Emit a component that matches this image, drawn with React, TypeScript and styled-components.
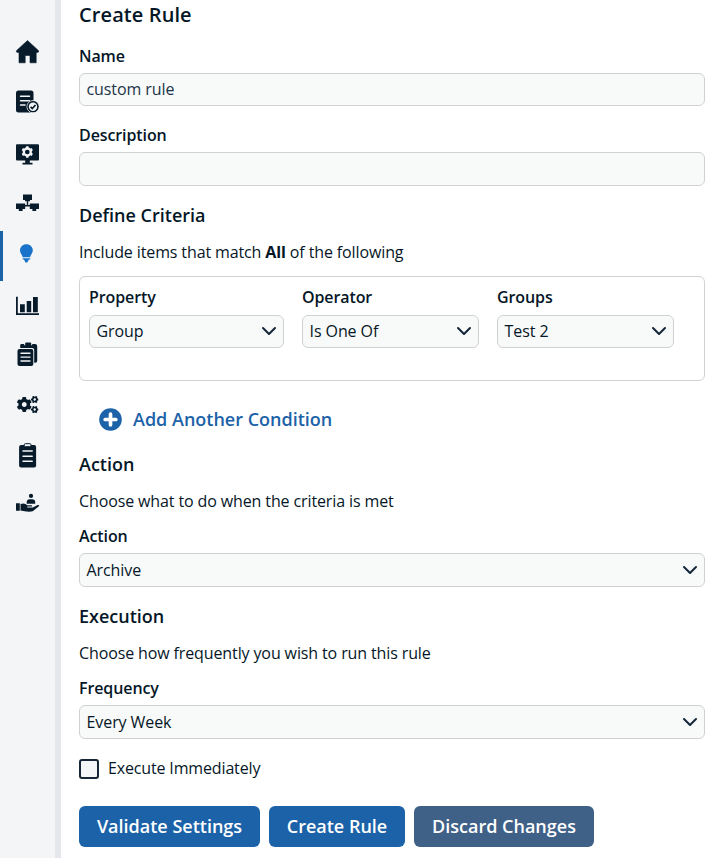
import React from "react";
import styled, { createGlobalStyle } from "styled-components";
import { FaCogs } from "react-icons/fa";

const GlobalStyle = createGlobalStyle`
  * { box-sizing: border-box; }
  body { margin: 0; background: #fff; overflow: hidden; }
  body, input, select, button { font-family: "Open Sans", sans-serif; color: #051727; }
`;

const Page = styled.div`
  display: flex;
  height: 858px;
`;

const Sidebar = styled.nav`
  width: 61px;
  flex: none;
  padding-top: 31px;
  background: #f3f5f7;
  border-right: 6px solid #e4e7ec;
`;

const NavItem = styled.a<{ $active?: boolean }>`
  display: block;
  height: 50px;
  color: ${(p) => (p.$active ? "#1a73cb" : "#071b2b")};
  box-shadow: ${(p) => (p.$active ? "inset 3px 0 0 #1c62a8" : "none")};
  svg { display: block; }
`;

const Main = styled.main`
  flex: 1;
  padding: 1px 20px 0 18px;
`;

const Title = styled.h1`
  margin: 0;
  font-size: 20px;
  font-weight: 600;
  line-height: 28px;
  letter-spacing: 0.1px;
`;

const SectionTitle = styled.h2<{ $gap: number }>`
  margin: ${(p) => p.$gap}px 0 0;
  font-size: 18px;
  font-weight: 600;
  line-height: 24px;
`;

const Hint = styled.p`
  margin: 13px 0 0;
  font-size: 16px;
  line-height: 24px;
  letter-spacing: -0.12px;
`;

const Field = styled.div<{ $gap?: number; $width?: number }>`
  margin-top: ${(p) => p.$gap ?? 0}px;
  width: ${(p) => (p.$width ? `${p.$width}px` : "100%")};
`;

const Label = styled.label`
  display: block;
  font-size: 16px;
  font-weight: 600;
  line-height: 24px;
  letter-spacing: -0.1px;
  margin-bottom: 5px;
`;

const Control = styled.div<{ $tall?: boolean }>`
  display: flex;
  align-items: center;
  justify-content: space-between;
  height: ${(p) => (p.$tall ? 34 : 33)}px;
  padding: 0 6px 0 6.5px;
  border: 1px solid #cfd1d4;
  border-radius: 6px;
  background: #f8faf9;
  font-size: 16px;
  line-height: 24px;
  letter-spacing: -0.08px;
`;

const TextInput = styled.input`
  flex: 1;
  padding: 0 0 2px;
  border: 0;
  outline: 0;
  background: transparent;
  font-size: 16px;
  line-height: 24px;
  letter-spacing: -0.08px;
  color: #1d3448;
`;

const Criteria = styled.section`
  display: flex;
  gap: 18px;
  height: 105px;
  margin-top: 12px;
  padding: 8px 9px;
  border: 1px solid #cfd1d4;
  border-radius: 6px;
  ${Label} { margin-bottom: 6px; }
  ${Control} { padding-bottom: 1px; }
`;

const AddButton = styled.button`
  display: flex;
  align-items: center;
  gap: 11px;
  height: 24px;
  margin: 26px 0 0 20px;
  padding: 0;
  border: 0;
  background: none;
  color: #1c62a8;
  font-size: 18px;
  font-weight: 600;
  line-height: 24px;
`;

const CheckRow = styled.label`
  display: flex;
  gap: 9px;
  height: 24px;
  margin-top: 17px;
  font-size: 16px;
  line-height: 24px;
  letter-spacing: -0.15px;
`;

const CheckBox = styled.input`
  appearance: none;
  width: 20px;
  height: 20px;
  margin: 3px 0 0;
  border: 2px solid #152536;
  border-radius: 3px;
  background: #f3f5f7;
`;

const Actions = styled.div`
  display: flex;
  gap: 9px;
  margin-top: 26px;
`;

const ActionButton = styled.button<{ $muted?: boolean; $width: number }>`
  width: ${(p) => p.$width}px;
  height: 41px;
  padding: 0 0 2px;
  border: 0;
  border-radius: 6px;
  background: ${(p) => (p.$muted ? "#3f6187" : "#1c62a8")};
  color: #fff;
  font-size: 18px;
  font-weight: 600;
  line-height: 24px;
  white-space: nowrap;
`;

const Chevron = () => (
  <svg width="16" height="16" viewBox="0 0 16 16" fill="none" stroke="#14273a" strokeWidth="2" strokeLinecap="round" strokeLinejoin="round">
    <path d="M2 5l6 6 6-6" />
  </svg>
);

const BG = "#f3f5f7";

const icons: React.ReactNode[] = [
  <g key="home">
    <path d="M27.5 9.5L38.4 19.6Q39.4 21.2 37.6 21.4H36.2V31.8H30V24.5H25.2V31.8H19V21.4H17.4Q15.6 21.2 16.6 19.6Z" stroke="currentColor" strokeWidth=".6" strokeLinejoin="round" />
  </g>,
  <g key="policy">
    <rect x="16" y="9.5" width="17.5" height="22" rx="2.5" />
    <path d="M20.5 15.2h9M20.5 19.7h9M20.5 24h4.5" stroke={BG} strokeWidth="1.5" strokeLinecap="round" />
    <circle cx="33" cy="25.7" r="6" stroke={BG} strokeWidth="1" />
    <circle cx="33" cy="25.7" r="4.9" fill={BG} stroke="currentColor" strokeWidth="1.4" />
    <path d="M30.6 25.8l1.7 1.7 3.2-3.5" fill="none" stroke="currentColor" strokeWidth="1.7" />
  </g>,
  <g key="monitor">
    <rect x="16" y="13.2" width="23" height="16.2" rx="1" />
    <path d="M25.2 29h4.6v2.8h2.7v1.8H22.5v-1.8h2.7z" />
    <circle cx="27.3" cy="21" r="3.5" fill="none" stroke={BG} strokeWidth="2.3" />
    <path d="M27.3 15.2v2M27.3 24.8v2M22.3 18.1l1.7 1M30.6 22.9l1.7 1M32.3 18.1l-1.7 1M24 22.9l-1.7 1" stroke={BG} strokeWidth="2.5" />
  </g>,
  <g key="network">
    <path d="M23 13.4h9v5.6h-9zM25 19h5v1.2h-5z" />
    <path d="M16 22.5h9.2v5.6H16zM29.8 22.5H39v5.6h-9.2zM18.8 28h3.8v1.9h-3.8zM32.4 28h3.8v1.9h-3.8z" />
    <path d="M27.5 19.5v5.4M25 24.7h5" fill="none" stroke="currentColor" strokeWidth="1.4" />
  </g>,
  <g key="bulb">
    <path d="M26.4 13.2C22.8 13.2 20 15.9 20 19.3C20 22.3 22.2 23.7 22.7 26.2H30.1C30.6 23.7 32.8 22.3 32.8 19.3C32.8 15.9 30 13.2 26.4 13.2Z" />
    <path d="M22.7 27.2h7.5v1.4h-1.3l-1.6 2.8h-1.8l-1.6-2.8h-1.2z" />
  </g>,
  <g key="chart">
    <path d="M16 15.8h1.8v16.4H39V34H16zM20 23.3h4.8v7.9H20zM26.7 20h4.5v11.2h-4.5zM33 16h4.8v15.2H33z" />
  </g>,
  <g key="reports">
    <path d="M21 13h3.2v1.2h8V13H35q2.2 0 2.2 2.2v14.6q0 2-2 2h-1V19q0-2-2-2H20.2v-2.3q0-1.7.8-1.7z" />
    <rect x="25.2" y="11.5" width="6" height="3.5" rx="1" />
    <rect x="17.5" y="18" width="15.8" height="17" rx="2" />
    <path d="M21 22.2h9M21 26.1h9M21 30h9" stroke={BG} strokeWidth="1.4" strokeLinecap="round" />
  </g>,
  <FaCogs key="cogs" x="17" y="12.8" size={21.5} />,
  <g key="clipboard">
    <rect x="19.1" y="14" width="17" height="22.5" rx="2" />
    <rect x="24.3" y="12.7" width="6.6" height="3" rx="1" fill={BG} stroke="currentColor" strokeWidth="1" />
    <path d="M23 20.1h9.2M23 25.2h9.2M23 30.2h9.2" stroke={BG} strokeWidth="1.5" strokeLinecap="round" />
  </g>,
  <g key="hand">
    <circle cx="31" cy="14.9" r="2.1" />
    <path d="M26.7 22.8v-1.3q0-3.3 3-3.3h2.5q3 0 3 3.3v1.3z" />
    <path d="M16 22.3h3.8v7.5H16zM20.5 23q3-1.2 5 0l1.8 1.2h4q1.5.4.5 1.4h-4.5v.8h5.5l4.8-2.4q2.3-.3 1.3 1.2l-5.2 4.3q-1 1-2.5 1-5 .5-10.7-1z" />
  </g>,
];

function Select({ value, tall }: { value: string; tall?: boolean }) {
  return (
    <Control $tall={tall} role="combobox">
      <span>{value}</span>
      <Chevron />
    </Control>
  );
}

export default function App() {
  return (
    <>
      <GlobalStyle />
      <Page>
        <Sidebar>
          {icons.map((icon, i) => (
            <NavItem key={i} $active={i === 4}>
              <svg width="55" height="50" viewBox="0 0 55 50" fill="currentColor">{icon}</svg>
            </NavItem>
          ))}
        </Sidebar>
        <Main>
          <Title>Create Rule</Title>
          <Field $gap={15}>
            <Label>Name</Label>
            <Control><TextInput defaultValue="custom rule" /></Control>
          </Field>
          <Field $gap={17}>
            <Label>Description</Label>
            <Control $tall><TextInput /></Control>
          </Field>

          <SectionTitle $gap={17}>Define Criteria</SectionTitle>
          <Hint>Include items that match <b>All</b> of the following</Hint>
          <Criteria>
            <Field $width={195}><Label>Property</Label><Select value="Group" /></Field>
            <Field $width={177}><Label>Operator</Label><Select value="Is One Of" /></Field>
            <Field $width={177}><Label>Groups</Label><Select value="Test 2" /></Field>
          </Criteria>
          <AddButton>
            <svg width="23" height="23" viewBox="0 0 23 23">
              <circle cx="11.5" cy="11.5" r="11.3" fill="#1c62a8" />
              <path d="M11.5 6.2v10.6M6.2 11.5h10.6" stroke="#fff" strokeWidth="3.7" strokeLinecap="round" />
            </svg>
            Add Another Condition
          </AddButton>

          <SectionTitle $gap={21}>Action</SectionTitle>
          <Hint>Choose what to do when the criteria is met</Hint>
          <Field $gap={11}>
            <Label>Action</Label>
            <Select value="Archive" tall />
          </Field>

          <SectionTitle $gap={17}>Execution</SectionTitle>
          <Hint>Choose how frequently you wish to run this rule</Hint>
          <Field $gap={11}>
            <Label>Frequency</Label>
            <Select value="Every Week" tall />
          </Field>

          <CheckRow><CheckBox type="checkbox" />Execute Immediately</CheckRow>
          <Actions>
            <ActionButton $width={181}>Validate Settings</ActionButton>
            <ActionButton $width={136}>Create Rule</ActionButton>
            <ActionButton $width={180} $muted>Discard Changes</ActionButton>
          </Actions>
        </Main>
      </Page>
    </>
  );
}
